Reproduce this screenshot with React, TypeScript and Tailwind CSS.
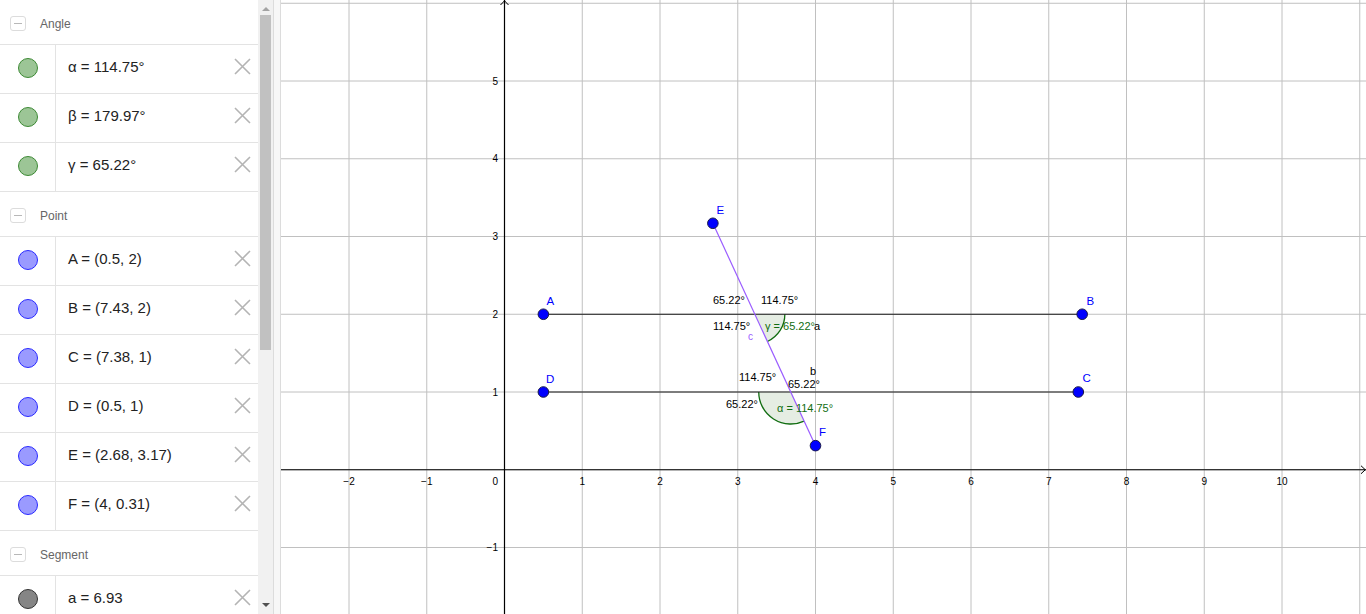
import React from "react";

type Item = { text: string; kind: "angle" | "point" | "segment" };
type Group = { title: string; items: Item[] };

const groups: Group[] = [
  {
    title: "Angle",
    items: [
      { text: "α = 114.75°", kind: "angle" },
      { text: "β = 179.97°", kind: "angle" },
      { text: "γ = 65.22°", kind: "angle" },
    ],
  },
  {
    title: "Point",
    items: [
      { text: "A = (0.5, 2)", kind: "point" },
      { text: "B = (7.43, 2)", kind: "point" },
      { text: "C = (7.38, 1)", kind: "point" },
      { text: "D = (0.5, 1)", kind: "point" },
      { text: "E = (2.68, 3.17)", kind: "point" },
      { text: "F = (4, 0.31)", kind: "point" },
    ],
  },
  {
    title: "Segment",
    items: [{ text: "a = 6.93", kind: "segment" }],
  },
];

function Dot({ kind }: { kind: Item["kind"] }) {
  if (kind === "angle")
    return <div className="h-[20px] w-[20px] rounded-full border border-[#3d8a35] bg-[#9cc596]" />;
  if (kind === "point")
    return <div className="h-[20px] w-[20px] rounded-full border border-[#2a2aff] bg-[#9a9aff]" />;
  return <div className="h-[20px] w-[20px] rounded-full border border-[#333333] bg-[#858585]" />;
}

function CloseX() {
  return (
    <svg width="17" height="17" viewBox="0 0 17 17">
      <path d="M1 1 L16 16 M16 1 L1 16" stroke="#b4b4b4" strokeWidth="1.6" fill="none" />
    </svg>
  );
}

function Header({ title }: { title: string }) {
  return (
    <div className="flex h-[45px] shrink-0 items-center border-b border-[#e3e3e3] pt-[3px]">
      <div className="ml-[10px] flex h-[15px] w-[16px] items-center justify-center rounded-[3px] border border-[#dcdcdc]">
        <div className="h-[1.5px] w-[8px] bg-[#b8b8b8]" />
      </div>
      <span className="ml-[14px] text-[12px] text-[#666666]">{title}</span>
    </div>
  );
}

function Row({ item }: { item: Item }) {
  return (
    <div className="flex h-[49px] shrink-0 items-stretch border-b border-[#e3e3e3]">
      <div className="flex w-[56px] shrink-0 items-center justify-center border-r border-[#e3e3e3] pb-[3px]">
        <Dot kind={item.kind} />
      </div>
      <div className="flex flex-1 items-center pb-[3px] pl-[12px] text-[15px] text-[#222222]">{item.text}</div>
      <div className="flex w-[30px] items-center justify-center pb-[5px] pr-[2px]">
        <CloseX />
      </div>
    </div>
  );
}

const OX = 504.5;
const OY = 469.75;
const U = 77.75;
const px = (x: number) => OX + x * U;
const py = (y: number) => OY - y * U;

function Graph() {
  const vx: number[] = [];
  for (let k = -2; k <= 11; k++) vx.push(k);
  const hy: number[] = [];
  for (let k = -1; k <= 6; k++) hy.push(k);

  const A = [px(0.5), py(2)];
  const B = [px(7.43), py(2)];
  const C = [px(7.38), py(1)];
  const D = [px(0.5), py(1)];
  const E = [px(2.68), py(3.17)];
  const F = [px(4), py(0.31)];

  const g1 = [px(3.22), py(2)];
  const g2 = [px(3.6815), py(1)];
  const ca = 0.4187;
  const sa = 0.9081;
  const r1 = 30;
  const r2 = 32;
  const gEnd = [g1[0] + r1 * ca, g1[1] + r1 * sa];
  const aEnd = [g2[0] + r2 * ca, g2[1] + r2 * sa];

  const font = "'Liberation Sans', Arial, sans-serif";
  const green = "#116d11";

  return (
    <svg width="1085" height="614" viewBox="281 0 1085 614" className="block">
      <rect x="281" y="0" width="1085" height="614" fill="#ffffff" />
      {vx.map((k) => (
        <line key={"v" + k} x1={px(k)} y1={0} x2={px(k)} y2={614} stroke="#c0c0c0" strokeWidth="1" />
      ))}
      {hy.map((k) => (
        <line key={"h" + k} x1={281} y1={py(k)} x2={1366} y2={py(k)} stroke="#c0c0c0" strokeWidth="1" />
      ))}
      {/* axes */}
      <line x1={281} y1={OY} x2={1366} y2={OY} stroke="#000" strokeWidth="1.2" />
      <line x1={OX} y1={0} x2={OX} y2={614} stroke="#000" strokeWidth="1.2" />
      <path d={`M ${OX - 4} 5 L ${OX} 0.8 L ${OX + 4} 5`} stroke="#000" strokeWidth="1" fill="none" />
      <path d={`M 1361 ${OY - 4} L 1365.3 ${OY} L 1361 ${OY + 4}`} stroke="#000" strokeWidth="1" fill="none" />
      {/* axis labels */}
      <g fontFamily={font} fontSize="10" fill="#000">
        {vx
          .filter((k) => k !== 0 && k !== 11)
          .map((k) => (
            <text key={"xl" + k} x={px(k)} y={485} textAnchor="middle">
              {k < 0 ? "−" + -k : String(k)}
            </text>
          ))}
        <text x={498} y={485} textAnchor="end">0</text>
        {hy
          .filter((k) => k !== 0 && k !== 6)
          .map((k) => (
            <text key={"yl" + k} x={498} y={py(k) + 3.5} textAnchor="end">
              {k < 0 ? "−" + -k : String(k)}
            </text>
          ))}
      </g>
      {/* angle sectors */}
      <path
        d={`M ${g1[0]} ${g1[1]} L ${g1[0] + r1} ${g1[1]} A ${r1} ${r1} 0 0 1 ${gEnd[0]} ${gEnd[1]} Z`}
        fill="#dfe8dc"
        fillOpacity="0.8"
      />
      <path
        d={`M ${g1[0] + r1} ${g1[1]} A ${r1} ${r1} 0 0 1 ${gEnd[0]} ${gEnd[1]}`}
        fill="none"
        stroke={green}
        strokeWidth="1.3"
      />
      <path
        d={`M ${g2[0]} ${g2[1]} L ${g2[0] - r2} ${g2[1]} A ${r2} ${r2} 0 0 0 ${aEnd[0]} ${aEnd[1]} Z`}
        fill="#dfe8dc"
        fillOpacity="0.8"
      />
      <path
        d={`M ${g2[0] - r2} ${g2[1]} A ${r2} ${r2} 0 0 0 ${aEnd[0]} ${aEnd[1]}`}
        fill="none"
        stroke={green}
        strokeWidth="1.3"
      />
      {/* segments */}
      <line x1={A[0]} y1={A[1]} x2={B[0]} y2={B[1]} stroke="#1a1a1a" strokeWidth="1.2" />
      <line x1={D[0]} y1={D[1]} x2={C[0]} y2={C[1]} stroke="#1a1a1a" strokeWidth="1.2" />
      <line x1={E[0]} y1={E[1]} x2={F[0]} y2={F[1]} stroke="#9a5cff" strokeWidth="1.2" />
      {/* labels */}
      <g fontFamily={font} fontSize="11" fill="#000">
        <text x={713} y={304}>65.22°</text>
        <text x={761} y={304}>114.75°</text>
        <text x={713} y={330}>114.75°</text>
        <text x={739} y={381}>114.75°</text>
        <text x={788} y={388}>65.22°</text>
        <text x={726} y={408}>65.22°</text>
        <text x={810} y={375}>b</text>
      </g>
      <g fontFamily={font} fontSize="11" fill={green}>
        <text x={765} y={330}>γ = 65.22°</text>
        <text x={777} y={412}>α = 114.75°</text>
      </g>
      <text x={814} y={330} fontFamily={font} fontSize="11" fill="#000">a</text>
      <text x={748} y={340} fontFamily={font} fontSize="10" fill="#9a5cff">c</text>
      {/* points */}
      {[A, B, C, D, E, F].map((p, i) => (
        <circle key={"p" + i} cx={p[0]} cy={p[1]} r="5.3" fill="#0000ff" stroke="#1a1a4a" strokeWidth="1" />
      ))}
      <g fontFamily={font} fontSize="11.5" fill="#0000ff">
        <text x={546.5} y={305}>A</text>
        <text x={1086.5} y={305}>B</text>
        <text x={1082.5} y={382}>C</text>
        <text x={546} y={383}>D</text>
        <text x={716.5} y={214}>E</text>
        <text x={819} y={436}>F</text>
      </g>
    </svg>
  );
}

export default function App() {
  return (
    <div
      className="flex h-[614px] w-[1366px] overflow-hidden bg-white"
      style={{ fontFamily: "'Liberation Sans', Arial, sans-serif" }}
    >
      {/* algebra panel */}
      <div className="flex h-full w-[258px] shrink-0 flex-col overflow-hidden">
        {groups.map((g) => (
          <React.Fragment key={g.title}>
            <Header title={g.title} />
            {g.items.map((it) => (
              <Row key={it.text} item={it} />
            ))}
          </React.Fragment>
        ))}
      </div>
      {/* scrollbar */}
      <div className="relative flex h-full w-[15px] shrink-0 flex-col items-center bg-[#f1f1f1]">
        <div className="mt-[7px] h-0 w-0 border-x-[4px] border-b-[4px] border-x-transparent border-b-[#a3a3a3]" />
        <div className="mt-[4px] h-[335px] w-[11px] bg-[#c1c1c1]" />
        <div className="flex-1" />
        <div className="mb-[7px] h-0 w-0 border-x-[4px] border-t-[4px] border-x-transparent border-t-[#505050]" />
      </div>
      {/* splitter */}
      <div className="h-full w-[8px] shrink-0 border-x border-[#dcdcdc] bg-[#f7f7f7]" />
      {/* graphics */}
      <div className="h-full flex-1 overflow-hidden">
        <Graph />
      </div>
    </div>
  );
}
